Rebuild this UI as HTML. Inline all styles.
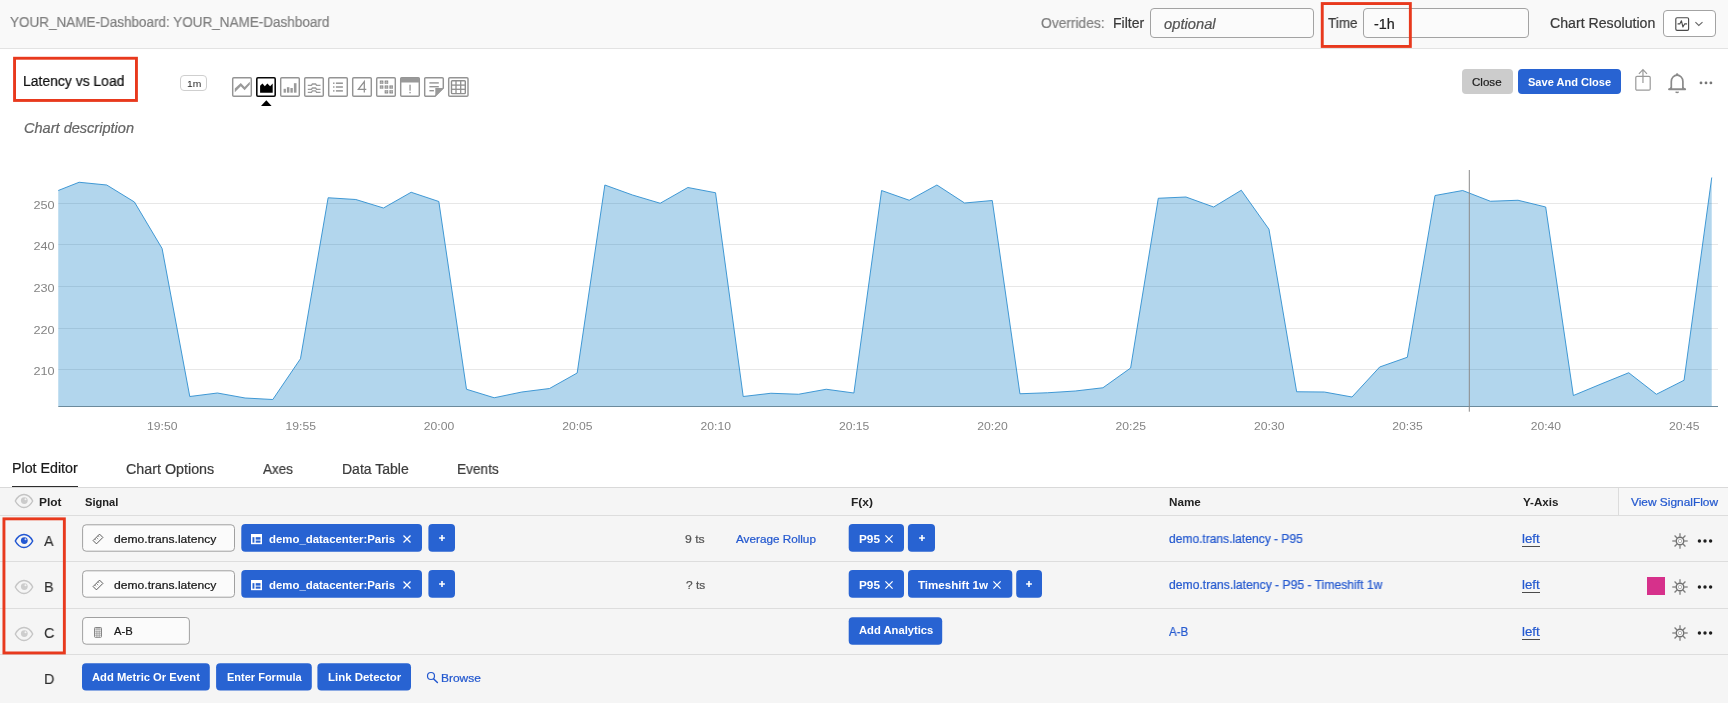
<!DOCTYPE html>
<html><head><meta charset="utf-8"><title>Latency vs Load</title>
<style>
html,body{margin:0;padding:0;background:#fff;}
body{width:1728px;height:703px;position:relative;overflow:hidden;font-family:"Liberation Sans", sans-serif;}
.b{position:absolute;}
.t{position:absolute;white-space:nowrap;line-height:normal;transform-origin:0 0;will-change:transform;font-family:"Liberation Sans", sans-serif;}
svg text{font-family:"Liberation Sans", sans-serif;}
svg.chart{will-change:transform;}
</style></head><body>
<div class="b" style="left:0px;top:0px;width:1728px;height:48px;background:#f9f9f9;border-bottom:1px solid #e3e3e3;"></div>
<div class="b" style="left:1150px;top:8px;width:164px;height:30px;box-sizing:border-box;border:1px solid #a3a3a3;border-radius:4px;background:#fbfbfb;"></div>
<div class="b" style="left:1363px;top:8px;width:166px;height:30px;box-sizing:border-box;border:1px solid #a3a3a3;border-radius:4px;background:#fbfbfb;"></div>
<div class="b" style="left:1663px;top:10px;width:53px;height:27px;box-sizing:border-box;border:1px solid #a3a3a3;border-radius:4px;background:#fff;"></div>
<div class="b" style="left:180px;top:75px;width:27px;height:16px;box-sizing:border-box;border:1px solid #cfcfcf;border-radius:4px;background:#fff;"></div>
<div class="b" style="left:1462px;top:69px;width:51px;height:25px;background:#cccccc;border-radius:4px;"></div>
<div class="b" style="left:1518px;top:69px;width:103px;height:25px;background:#2863d2;border-radius:4px;"></div>
<div class="b" style="left:12px;top:486px;width:66px;height:1px;background:#2e2e2e;"></div>
<div class="b" style="left:0px;top:487px;width:1728px;height:216px;background:#f5f5f5;border-top:1px solid #d9d9d9;"></div>
<div class="b" style="left:0px;top:515px;width:1728px;height:1px;background:#dddddd;"></div>
<div class="b" style="left:0px;top:561px;width:1728px;height:1px;background:#dddddd;"></div>
<div class="b" style="left:0px;top:608px;width:1728px;height:1px;background:#dddddd;"></div>
<div class="b" style="left:0px;top:654px;width:1728px;height:1px;background:#dddddd;"></div>
<div class="b" style="left:1618px;top:488px;width:110px;height:27px;background:#f7f7f7;border-left:1px solid #dcdcdc;"></div>
<div class="b" style="left:1647px;top:577px;width:17.700000000000045px;height:17.700000000000045px;background:#d6318b;"></div>
<svg class="b" style="left:0;top:0" width="1728" height="703" viewBox="0 0 1728 703"><rect x="82.60" y="524.80" width="151.90" height="26.40" rx="3.5" fill="#fbfbfb" stroke="#a0a0a0" stroke-width="1"/><rect x="82.60" y="570.80" width="151.90" height="26.40" rx="3.5" fill="#fbfbfb" stroke="#a0a0a0" stroke-width="1"/><rect x="82.60" y="617.50" width="106.80" height="26.70" rx="3.5" fill="#fbfbfb" stroke="#a0a0a0" stroke-width="1"/><rect x="241.30" y="524.00" width="180.70" height="27.70" rx="4" fill="#2863d2"/><rect x="428.40" y="524.00" width="26.60" height="27.70" rx="4" fill="#2863d2"/><rect x="848.70" y="524.00" width="55.30" height="27.70" rx="4" fill="#2863d2"/><rect x="241.30" y="570.00" width="180.70" height="27.80" rx="4" fill="#2863d2"/><rect x="428.40" y="570.00" width="26.60" height="27.80" rx="4" fill="#2863d2"/><rect x="848.70" y="570.00" width="55.30" height="27.80" rx="4" fill="#2863d2"/><rect x="907.90" y="524.00" width="27.10" height="27.70" rx="4" fill="#2863d2"/><rect x="908.00" y="570.00" width="104.30" height="27.80" rx="4" fill="#2863d2"/><rect x="1016.20" y="570.00" width="25.80" height="27.80" rx="4" fill="#2863d2"/><rect x="848.70" y="617.30" width="93.50" height="27.40" rx="4" fill="#2863d2"/><rect x="82.00" y="663.20" width="127.80" height="27.30" rx="4" fill="#2863d2"/><rect x="216.10" y="663.20" width="95.70" height="27.30" rx="4" fill="#2863d2"/><rect x="317.40" y="663.20" width="93.60" height="27.30" rx="4" fill="#2863d2"/></svg>
<div class="b" style="left:1522px;top:546px;width:18px;height:1px;background:#4a4a4a;"></div>
<div class="b" style="left:1522px;top:592px;width:18px;height:1px;background:#4a4a4a;"></div>
<div class="b" style="left:1522px;top:639px;width:18px;height:1px;background:#4a4a4a;"></div>
<svg class="b chart" style="left:0;top:150px" width="1728" height="300" viewBox="0 150 1728 300">
<line x1="58.3" x2="1718" y1="203.5" y2="203.5" stroke="#e7e7e7" stroke-width="1"/>
<line x1="58.3" x2="1718" y1="244.5" y2="244.5" stroke="#e7e7e7" stroke-width="1"/>
<line x1="58.3" x2="1718" y1="286.5" y2="286.5" stroke="#e7e7e7" stroke-width="1"/>
<line x1="58.3" x2="1718" y1="328.5" y2="328.5" stroke="#e7e7e7" stroke-width="1"/>
<line x1="58.3" x2="1718" y1="369.5" y2="369.5" stroke="#e7e7e7" stroke-width="1"/>
<polygon points="58.25,406.5 58.25,190.50 79.08,182.25 106.76,185.00 134.43,202.00 162.10,248.50 189.77,396.50 217.44,393.00 245.12,398.00 272.79,399.50 300.46,358.75 328.13,197.75 355.80,199.50 383.48,208.00 411.15,192.25 438.82,201.50 466.49,389.25 494.16,397.75 521.84,392.00 549.51,388.50 577.18,373.00 604.85,185.00 632.52,195.00 660.20,203.25 687.87,187.50 715.54,192.75 743.21,396.50 770.88,393.25 798.56,394.25 826.23,389.25 853.90,393.00 881.57,190.50 909.24,200.25 936.92,185.00 964.59,203.00 992.26,200.50 1019.93,393.75 1047.60,392.75 1075.28,391.00 1102.95,387.75 1130.62,368.00 1158.29,198.25 1185.96,197.00 1213.64,207.00 1241.31,190.25 1268.98,229.25 1296.65,391.75 1324.32,392.00 1352.00,397.00 1379.67,367.00 1407.34,357.25 1435.01,195.50 1462.68,190.50 1490.36,201.25 1518.03,200.25 1545.70,207.00 1573.37,395.50 1601.04,384.00 1628.72,372.75 1656.39,394.25 1684.06,380.25 1711.73,177.50 1711.73,406.5" fill="rgba(0,119,194,0.3)"/>
<polyline points="58.25,190.50 79.08,182.25 106.76,185.00 134.43,202.00 162.10,248.50 189.77,396.50 217.44,393.00 245.12,398.00 272.79,399.50 300.46,358.75 328.13,197.75 355.80,199.50 383.48,208.00 411.15,192.25 438.82,201.50 466.49,389.25 494.16,397.75 521.84,392.00 549.51,388.50 577.18,373.00 604.85,185.00 632.52,195.00 660.20,203.25 687.87,187.50 715.54,192.75 743.21,396.50 770.88,393.25 798.56,394.25 826.23,389.25 853.90,393.00 881.57,190.50 909.24,200.25 936.92,185.00 964.59,203.00 992.26,200.50 1019.93,393.75 1047.60,392.75 1075.28,391.00 1102.95,387.75 1130.62,368.00 1158.29,198.25 1185.96,197.00 1213.64,207.00 1241.31,190.25 1268.98,229.25 1296.65,391.75 1324.32,392.00 1352.00,397.00 1379.67,367.00 1407.34,357.25 1435.01,195.50 1462.68,190.50 1490.36,201.25 1518.03,200.25 1545.70,207.00 1573.37,395.50 1601.04,384.00 1628.72,372.75 1656.39,394.25 1684.06,380.25 1711.73,177.50" fill="none" stroke="#2f8fd0" stroke-width="1" stroke-linejoin="round" stroke-opacity="0.9"/>
<line x1="58.3" x2="1718" y1="406.5" y2="406.5" stroke="#6b8a9c" stroke-width="1.2"/>
<line x1="1469.3" x2="1469.3" y1="170" y2="411.7" stroke="#8a8a8a" stroke-width="1"/>
<text x="33.4" y="208.8" font-size="11.4" textLength="21.2" lengthAdjust="spacingAndGlyphs" fill="#858585">250</text>
<text x="33.4" y="249.8" font-size="11.4" textLength="21.2" lengthAdjust="spacingAndGlyphs" fill="#858585">240</text>
<text x="33.4" y="291.8" font-size="11.4" textLength="21.2" lengthAdjust="spacingAndGlyphs" fill="#858585">230</text>
<text x="33.4" y="333.8" font-size="11.4" textLength="21.2" lengthAdjust="spacingAndGlyphs" fill="#858585">220</text>
<text x="33.4" y="374.8" font-size="11.4" textLength="21.2" lengthAdjust="spacingAndGlyphs" fill="#858585">210</text>
<text x="147.1" y="429.8" font-size="11.5" textLength="30.4" lengthAdjust="spacingAndGlyphs" fill="#858585">19:50</text>
<text x="285.5" y="429.8" font-size="11.5" textLength="30.4" lengthAdjust="spacingAndGlyphs" fill="#858585">19:55</text>
<text x="423.8" y="429.8" font-size="11.5" textLength="30.4" lengthAdjust="spacingAndGlyphs" fill="#858585">20:00</text>
<text x="562.2" y="429.8" font-size="11.5" textLength="30.4" lengthAdjust="spacingAndGlyphs" fill="#858585">20:05</text>
<text x="700.5" y="429.8" font-size="11.5" textLength="30.4" lengthAdjust="spacingAndGlyphs" fill="#858585">20:10</text>
<text x="838.9" y="429.8" font-size="11.5" textLength="30.4" lengthAdjust="spacingAndGlyphs" fill="#858585">20:15</text>
<text x="977.3" y="429.8" font-size="11.5" textLength="30.4" lengthAdjust="spacingAndGlyphs" fill="#858585">20:20</text>
<text x="1115.6" y="429.8" font-size="11.5" textLength="30.4" lengthAdjust="spacingAndGlyphs" fill="#858585">20:25</text>
<text x="1254.0" y="429.8" font-size="11.5" textLength="30.4" lengthAdjust="spacingAndGlyphs" fill="#858585">20:30</text>
<text x="1392.3" y="429.8" font-size="11.5" textLength="30.4" lengthAdjust="spacingAndGlyphs" fill="#858585">20:35</text>
<text x="1530.7" y="429.8" font-size="11.5" textLength="30.4" lengthAdjust="spacingAndGlyphs" fill="#858585">20:40</text>
<text x="1669.1" y="429.8" font-size="11.5" textLength="30.4" lengthAdjust="spacingAndGlyphs" fill="#858585">20:45</text>
</svg>
<svg class="b" style="left:232px;top:77px;overflow:visible" width="21" height="20" viewBox="0 0 21 20" ><rect x="0.7" y="0.7" width="18.6" height="18.6" rx="1.1" fill="#fff" stroke="#949494" stroke-width="1.45"/><polygon points="2.8,11.4 8.8,6 12.6,10 17.8,4.8 17.8,7.6 12.6,13.3 8.8,9.3 2.8,15.2" fill="#9a9a9a"/></svg>
<svg class="b" style="left:256px;top:77px;overflow:visible" width="21" height="20" viewBox="0 0 21 20" ><rect x="0.8" y="0.8" width="18.4" height="18.4" rx="1.1" fill="#fff" stroke="#0a0a0a" stroke-width="1.6"/><polygon points="4.1,15.7 4.1,8.8 6.5,6.4 8.8,9.2 11.4,6.4 14.1,9.2 16.7,6.6 16.7,15.7" fill="#000"/></svg>
<svg class="b" style="left:280px;top:77px;overflow:visible" width="21" height="20" viewBox="0 0 21 20" ><rect x="0.7" y="0.7" width="18.6" height="18.6" rx="1.1" fill="#fff" stroke="#949494" stroke-width="1.45"/><g fill="#9a9a9a"><rect x="3.6" y="11.8" width="2.3" height="3.9"/><rect x="6.9" y="10.2" width="2.5" height="5.5"/><rect x="10.4" y="11" width="2.4" height="4.7"/><rect x="13.9" y="6.2" width="2.6" height="9.5"/></g></svg>
<svg class="b" style="left:304px;top:77px;overflow:visible" width="21" height="20" viewBox="0 0 21 20" ><rect x="0.7" y="0.7" width="18.6" height="18.6" rx="1.1" fill="#fff" stroke="#949494" stroke-width="1.45"/><g fill="none" stroke="#9a9a9a" stroke-width="1.35"><path d="M3.8 8.4 H7.4 L8.4 7.0 H11.6 L12.6 8.4 H16.5" /><path d="M3.8 12.4 H7.4 L8.4 11.0 H11.6 L12.6 12.4 H16.5" /><path d="M3.8 15.3 H7.4 L8.4 13.9 H11.6 L12.6 15.3 H16.5" /></g></svg>
<svg class="b" style="left:328px;top:77px;overflow:visible" width="21" height="20" viewBox="0 0 21 20" ><rect x="0.7" y="0.7" width="18.6" height="18.6" rx="1.1" fill="#fff" stroke="#949494" stroke-width="1.45"/><g fill="#949494"><rect x="5" y="5.5" width="1.5" height="1.4"/><rect x="7.9" y="5.45" width="7" height="1.5"/><rect x="5" y="9.3" width="1.5" height="1.4"/><rect x="7.9" y="9.25" width="7" height="1.5"/><rect x="5" y="13.200000000000001" width="1.5" height="1.4"/><rect x="7.9" y="13.15" width="7" height="1.5"/></g></svg>
<svg class="b" style="left:352px;top:77px;overflow:visible" width="21" height="20" viewBox="0 0 21 20" ><rect x="0.7" y="0.7" width="18.6" height="18.6" rx="1.1" fill="#fff" stroke="#949494" stroke-width="1.45"/><path d="M12.3 15.4 V4.6 L6.3 12.3 H14.3" fill="none" stroke="#8f8f8f" stroke-width="1.25" stroke-linejoin="miter"/></svg>
<svg class="b" style="left:376px;top:77px;overflow:visible" width="21" height="20" viewBox="0 0 21 20" ><rect x="0.7" y="0.7" width="18.6" height="18.6" rx="1.1" fill="#fff" stroke="#949494" stroke-width="1.45"/><rect x="3.8" y="3.5" width="3.55" height="3.3" fill="#8c8c8c"/><rect x="5.35" y="3.5" width="0.45" height="3.3" fill="#cfcfcf"/><rect x="3.8" y="4.95" width="3.55" height="0.4" fill="#cfcfcf"/><rect x="8.65" y="3.5" width="3.55" height="3.3" fill="#8c8c8c"/><rect x="10.200000000000001" y="3.5" width="0.45" height="3.3" fill="#cfcfcf"/><rect x="8.65" y="4.95" width="3.55" height="0.4" fill="#cfcfcf"/><rect x="3.8" y="8.4" width="3.55" height="3.3" fill="#8c8c8c"/><rect x="5.35" y="8.4" width="0.45" height="3.3" fill="#cfcfcf"/><rect x="3.8" y="9.85" width="3.55" height="0.4" fill="#cfcfcf"/><rect x="8.65" y="8.4" width="3.55" height="3.3" fill="#8c8c8c"/><rect x="10.200000000000001" y="8.4" width="0.45" height="3.3" fill="#cfcfcf"/><rect x="8.65" y="9.85" width="3.55" height="0.4" fill="#cfcfcf"/><rect x="13.4" y="8.4" width="3.55" height="3.3" fill="#8c8c8c"/><rect x="14.950000000000001" y="8.4" width="0.45" height="3.3" fill="#cfcfcf"/><rect x="13.4" y="9.85" width="3.55" height="0.4" fill="#cfcfcf"/><rect x="8.65" y="13.2" width="3.55" height="3.3" fill="#8c8c8c"/><rect x="10.200000000000001" y="13.2" width="0.45" height="3.3" fill="#cfcfcf"/><rect x="8.65" y="14.649999999999999" width="3.55" height="0.4" fill="#cfcfcf"/><rect x="13.4" y="13.2" width="3.55" height="3.3" fill="#8c8c8c"/><rect x="14.950000000000001" y="13.2" width="0.45" height="3.3" fill="#cfcfcf"/><rect x="13.4" y="14.649999999999999" width="3.55" height="0.4" fill="#cfcfcf"/></svg>
<svg class="b" style="left:400px;top:77px;overflow:visible" width="21" height="20" viewBox="0 0 21 20" ><rect x="0.7" y="0.7" width="18.6" height="18.6" rx="1.1" fill="#fff" stroke="#949494" stroke-width="1.45"/><rect x="0.7" y="0.7" width="18.6" height="4.8" fill="#999"/><rect x="9.4" y="7.7" width="1.3" height="6" fill="#949494"/><rect x="9.35" y="14.9" width="1.4" height="1.4" fill="#949494"/></svg>
<svg class="b" style="left:424px;top:77px;overflow:visible" width="21" height="20" viewBox="0 0 21 20" ><path d="M1.8 0.7 H18.2 a1.1 1.1 0 0 1 1.1 1.1 V11 L11 19.3 H1.8 a1.1 1.1 0 0 1 -1.1 -1.1 V1.8 a1.1 1.1 0 0 1 1.1 -1.1 Z" fill="#fff" stroke="#949494" stroke-width="1.45"/><polygon points="11.3,11.1 19.7,11.1 11.3,19.5" fill="#999"/><g fill="#949494"><rect x="5.4" y="5.2" width="9.4" height="1.4"/><rect x="5.4" y="9" width="9.4" height="1.4"/><rect x="5.4" y="13" width="4.5" height="1.4"/></g></svg>
<svg class="b" style="left:448px;top:77px;overflow:visible" width="21" height="20" viewBox="0 0 21 20" ><rect x="0.7" y="0.7" width="19.3" height="18.6" rx="1.1" fill="#fff" stroke="#949494" stroke-width="1.45"/><rect x="3.5" y="3.8" width="13.8" height="12.8" rx="0.8" fill="#fff" stroke="#8f8f8f" stroke-width="1.4"/><line x1="8.0" x2="8.0" y1="3.8" y2="16.6" stroke="#8f8f8f" stroke-width="1.3"/><line x1="12.7" x2="12.7" y1="3.8" y2="16.6" stroke="#8f8f8f" stroke-width="1.3"/><line x1="3.5" x2="17.3" y1="8.1" y2="8.1" stroke="#8f8f8f" stroke-width="1.3"/><line x1="3.5" x2="17.3" y1="12.3" y2="12.3" stroke="#8f8f8f" stroke-width="1.3"/></svg>
<svg class="b" style="left:258px;top:98px;overflow:visible" width="16" height="10" viewBox="0 0 16 10" ><polygon points="3,8 13.6,8 8.3,2.3" fill="#000"/></svg>
<svg class="b" style="left:1630px;top:66px;overflow:visible" width="26" height="28" viewBox="0 0 26 28" ><g fill="none" stroke="#9a9a9a" stroke-width="1.2"><rect x="5.8" y="10.4" width="14.4" height="13.8" rx="1.2"/><path d="M12.95 17 V4 M8.9 7.8 L12.95 3.7 L17 7.8"/></g></svg>
<svg class="b" style="left:1664px;top:70px;overflow:visible" width="26" height="26" viewBox="0 0 26 26" ><g fill="none" stroke="#8a8a8a" stroke-width="1.7" stroke-linejoin="round"><path d="M7.3 19.2 V11.4 a5.8 6.2 0 0 1 11.6 0 V19.2"/><path d="M5 19.3 H21.2" stroke-width="1.9" stroke-linecap="round"/><path d="M7.3 17.6 L5.4 19.3 M18.9 17.6 L20.8 19.3" stroke-width="1.3"/><path d="M11.6 21.7 Q13.1 23.3 14.6 21.7" stroke-width="1.3"/></g><circle cx="13.1" cy="4.4" r="1.25" fill="#8a8a8a"/></svg>
<svg class="b" style="left:1696px;top:78px;overflow:visible" width="20" height="10" viewBox="0 0 20 10" ><g fill="#777"><circle cx="5" cy="4.9" r="1.4"/><circle cx="10" cy="4.9" r="1.4"/><circle cx="14.9" cy="4.9" r="1.4"/></g></svg>
<svg class="b" style="left:1670px;top:12px;overflow:visible" width="40" height="24" viewBox="0 0 40 24" ><g fill="none" stroke="#4a4a4a" stroke-width="1.15" stroke-linejoin="round" stroke-linecap="round"><rect x="5.8" y="5.7" width="12.8" height="12.6" rx="1.3"/><path d="M8 11.9 H9.8 L11.4 8.7 L12.9 15 L14.6 11.9 H16.6" stroke-width="1.1"/></g><path d="M25.4 10.2 L28.8 13.5 L32.5 10.2" fill="none" stroke="#666" stroke-width="1.1"/></svg>
<svg class="b" style="left:12px;top:491.4px;overflow:visible" width="24" height="20" viewBox="-12 -10 24 20"><path d="M-8.7 0 C-4.3 -8.6 4.3 -8.6 8.7 0 C4.3 8.6 -4.3 8.6 -8.7 0 Z" stroke-linejoin="miter" fill="none" stroke="#c4c4c4" stroke-width="1.4"/><circle cx="0.3" cy="-0.4" r="3.4" fill="#cbcbcb"/><circle cx="1.5" cy="-1.7" r="1" fill="#fff" fill-opacity="0.75"/></svg>
<svg class="b" style="left:12px;top:531px;overflow:visible" width="24" height="20" viewBox="-12 -10 24 20"><path d="M-8.7 0 C-4.3 -8.6 4.3 -8.6 8.7 0 C4.3 8.6 -4.3 8.6 -8.7 0 Z" stroke-linejoin="miter" fill="none" stroke="#2257d2" stroke-width="1.5"/><circle cx="0.3" cy="-0.4" r="3.4" fill="#2257d2"/><circle cx="1.5" cy="-1.7" r="1" fill="#fff" fill-opacity="0.75"/></svg>
<svg class="b" style="left:12.100000000000001px;top:577px;overflow:visible" width="24" height="20" viewBox="-12 -10 24 20"><path d="M-8.7 0 C-4.3 -8.6 4.3 -8.6 8.7 0 C4.3 8.6 -4.3 8.6 -8.7 0 Z" stroke-linejoin="miter" fill="none" stroke="#c6c6c6" stroke-width="1.4"/><circle cx="0.3" cy="-0.4" r="3.4" fill="#cdcdcd"/><circle cx="1.5" cy="-1.7" r="1" fill="#fff" fill-opacity="0.75"/></svg>
<svg class="b" style="left:12.100000000000001px;top:623.9px;overflow:visible" width="24" height="20" viewBox="-12 -10 24 20"><path d="M-8.7 0 C-4.3 -8.6 4.3 -8.6 8.7 0 C4.3 8.6 -4.3 8.6 -8.7 0 Z" stroke-linejoin="miter" fill="none" stroke="#c6c6c6" stroke-width="1.4"/><circle cx="0.3" cy="-0.4" r="3.4" fill="#cdcdcd"/><circle cx="1.5" cy="-1.7" r="1" fill="#fff" fill-opacity="0.75"/></svg>
<svg class="b" style="left:89.95px;top:531px;overflow:visible" width="16" height="16" viewBox="-8 -8 16 16"><g transform="rotate(-45)" fill="none" stroke="#4a4a4a" stroke-width="0.85"><rect x="-4.55" y="-2.35" width="9.1" height="4.7"/><path d="M-2.3 -2.35 V-0.4 M0 -2.35 V0.3 M2.3 -2.35 V-0.4" stroke-width="0.7" stroke="#777"/></g></svg>
<svg class="b" style="left:89.95px;top:577.3px;overflow:visible" width="16" height="16" viewBox="-8 -8 16 16"><g transform="rotate(-45)" fill="none" stroke="#4a4a4a" stroke-width="0.85"><rect x="-4.55" y="-2.35" width="9.1" height="4.7"/><path d="M-2.3 -2.35 V-0.4 M0 -2.35 V0.3 M2.3 -2.35 V-0.4" stroke-width="0.7" stroke="#777"/></g></svg>
<svg class="b" style="left:94px;top:626.7px;overflow:visible" width="8" height="11" viewBox="0 0 8 11" ><rect x="0.5" y="0.5" width="7" height="9.8" rx="0.8" fill="none" stroke="#777" stroke-width="0.9"/><rect x="1.3" y="1.4" width="5.4" height="1.3" fill="#999"/><line x1="0.5" x2="7.5" y1="4.2" y2="4.2" stroke="#8c8c8c" stroke-width="0.7"/><line x1="0.5" x2="7.5" y1="6.2" y2="6.2" stroke="#8c8c8c" stroke-width="0.7"/><line x1="0.5" x2="7.5" y1="8.2" y2="8.2" stroke="#8c8c8c" stroke-width="0.7"/><line x1="2.9" x2="2.9" y1="3.6" y2="10.3" stroke="#8c8c8c" stroke-width="0.7"/><line x1="5.2" x2="5.2" y1="3.6" y2="10.3" stroke="#8c8c8c" stroke-width="0.7"/></svg>
<svg class="b" style="left:251px;top:534px;overflow:visible" width="11" height="10.2" viewBox="0 0 11 10.2" ><rect x="0.75" y="0.75" width="9.5" height="8.7" fill="none" stroke="#fff" stroke-width="1.5"/><rect x="0.75" y="0.75" width="9.5" height="2.4" fill="#fff"/><rect x="3.4" y="3" width="1.3" height="6.4" fill="#fff"/><rect x="4" y="5.6" width="6.2" height="1" fill="#fff" fill-opacity="0.9"/></svg>
<svg class="b" style="left:251px;top:580.2px;overflow:visible" width="11" height="10.2" viewBox="0 0 11 10.2" ><rect x="0.75" y="0.75" width="9.5" height="8.7" fill="none" stroke="#fff" stroke-width="1.5"/><rect x="0.75" y="0.75" width="9.5" height="2.4" fill="#fff"/><rect x="3.4" y="3" width="1.3" height="6.4" fill="#fff"/><rect x="4" y="5.6" width="6.2" height="1" fill="#fff" fill-opacity="0.9"/></svg>
<svg class="b" style="left:401.5px;top:534.1px;overflow:visible" width="10" height="10" viewBox="-5 -5 10 10"><path d="M-3.5 -3.5 L3.5 3.5 M3.5 -3.5 L-3.5 3.5" stroke="#fff" stroke-width="1.25" fill="none"/></svg>
<svg class="b" style="left:883.8px;top:534.1px;overflow:visible" width="10" height="10" viewBox="-5 -5 10 10"><path d="M-3.6 -3.6 L3.6 3.6 M3.6 -3.6 L-3.6 3.6" stroke="#fff" stroke-width="1.25" fill="none"/></svg>
<svg class="b" style="left:436.7px;top:532.5px;overflow:visible" width="10" height="10" viewBox="-5 -5 10 10"><path d="M-2.9 0 H2.9 M0 -2.9 V2.9" stroke="#fff" stroke-width="1.6" fill="none"/></svg>
<svg class="b" style="left:401.5px;top:580.1px;overflow:visible" width="10" height="10" viewBox="-5 -5 10 10"><path d="M-3.5 -3.5 L3.5 3.5 M3.5 -3.5 L-3.5 3.5" stroke="#fff" stroke-width="1.25" fill="none"/></svg>
<svg class="b" style="left:883.8px;top:580.1px;overflow:visible" width="10" height="10" viewBox="-5 -5 10 10"><path d="M-3.6 -3.6 L3.6 3.6 M3.6 -3.6 L-3.6 3.6" stroke="#fff" stroke-width="1.25" fill="none"/></svg>
<svg class="b" style="left:436.7px;top:578.5px;overflow:visible" width="10" height="10" viewBox="-5 -5 10 10"><path d="M-2.9 0 H2.9 M0 -2.9 V2.9" stroke="#fff" stroke-width="1.6" fill="none"/></svg>
<svg class="b" style="left:991.7px;top:580.1px;overflow:visible" width="10" height="10" viewBox="-5 -5 10 10"><path d="M-3.6 -3.6 L3.6 3.6 M3.6 -3.6 L-3.6 3.6" stroke="#fff" stroke-width="1.25" fill="none"/></svg>
<svg class="b" style="left:916.5px;top:532.5px;overflow:visible" width="10" height="10" viewBox="-5 -5 10 10"><path d="M-2.9 0 H2.9 M0 -2.9 V2.9" stroke="#fff" stroke-width="1.6" fill="none"/></svg>
<svg class="b" style="left:1024.4px;top:578.7px;overflow:visible" width="10" height="10" viewBox="-5 -5 10 10"><path d="M-2.9 0 H2.9 M0 -2.9 V2.9" stroke="#fff" stroke-width="1.6" fill="none"/></svg>
<svg class="b" style="left:1671.25px;top:531.5px;overflow:visible" width="18" height="18" viewBox="-9 -9 18 18"><g stroke="#7d7d7d" fill="none"><circle r="3.8" stroke-width="1.4" stroke="#707070"/><circle r="1.7" stroke-width="0.7" stroke="#a0a0a0" fill="#fff"/><line x1="4.20" y1="0.00" x2="7.70" y2="0.00" stroke-width="1.3"/><line x1="2.97" y1="2.97" x2="5.44" y2="5.44" stroke-width="1.3"/><line x1="0.00" y1="4.20" x2="0.00" y2="7.70" stroke-width="1.3"/><line x1="-2.97" y1="2.97" x2="-5.44" y2="5.44" stroke-width="1.3"/><line x1="-4.20" y1="0.00" x2="-7.70" y2="0.00" stroke-width="1.3"/><line x1="-2.97" y1="-2.97" x2="-5.44" y2="-5.44" stroke-width="1.3"/><line x1="-0.00" y1="-4.20" x2="-0.00" y2="-7.70" stroke-width="1.3"/><line x1="2.97" y1="-2.97" x2="5.44" y2="-5.44" stroke-width="1.3"/></g></svg>
<svg class="b" style="left:1695.9px;top:536.5px;overflow:visible" width="18" height="8" viewBox="-9 -4 18 8"><g fill="#1e1e1e"><circle cx="-5.6" cy="0" r="1.7"/><circle cx="0" cy="0" r="1.7"/><circle cx="5.6" cy="0" r="1.7"/></g></svg>
<svg class="b" style="left:1671.25px;top:577.9px;overflow:visible" width="18" height="18" viewBox="-9 -9 18 18"><g stroke="#7d7d7d" fill="none"><circle r="3.8" stroke-width="1.4" stroke="#707070"/><circle r="1.7" stroke-width="0.7" stroke="#a0a0a0" fill="#fff"/><line x1="4.20" y1="0.00" x2="7.70" y2="0.00" stroke-width="1.3"/><line x1="2.97" y1="2.97" x2="5.44" y2="5.44" stroke-width="1.3"/><line x1="0.00" y1="4.20" x2="0.00" y2="7.70" stroke-width="1.3"/><line x1="-2.97" y1="2.97" x2="-5.44" y2="5.44" stroke-width="1.3"/><line x1="-4.20" y1="0.00" x2="-7.70" y2="0.00" stroke-width="1.3"/><line x1="-2.97" y1="-2.97" x2="-5.44" y2="-5.44" stroke-width="1.3"/><line x1="-0.00" y1="-4.20" x2="-0.00" y2="-7.70" stroke-width="1.3"/><line x1="2.97" y1="-2.97" x2="5.44" y2="-5.44" stroke-width="1.3"/></g></svg>
<svg class="b" style="left:1695.9px;top:582.9px;overflow:visible" width="18" height="8" viewBox="-9 -4 18 8"><g fill="#1e1e1e"><circle cx="-5.6" cy="0" r="1.7"/><circle cx="0" cy="0" r="1.7"/><circle cx="5.6" cy="0" r="1.7"/></g></svg>
<svg class="b" style="left:1671.25px;top:624.2px;overflow:visible" width="18" height="18" viewBox="-9 -9 18 18"><g stroke="#7d7d7d" fill="none"><circle r="3.8" stroke-width="1.4" stroke="#707070"/><circle r="1.7" stroke-width="0.7" stroke="#a0a0a0" fill="#fff"/><line x1="4.20" y1="0.00" x2="7.70" y2="0.00" stroke-width="1.3"/><line x1="2.97" y1="2.97" x2="5.44" y2="5.44" stroke-width="1.3"/><line x1="0.00" y1="4.20" x2="0.00" y2="7.70" stroke-width="1.3"/><line x1="-2.97" y1="2.97" x2="-5.44" y2="5.44" stroke-width="1.3"/><line x1="-4.20" y1="0.00" x2="-7.70" y2="0.00" stroke-width="1.3"/><line x1="-2.97" y1="-2.97" x2="-5.44" y2="-5.44" stroke-width="1.3"/><line x1="-0.00" y1="-4.20" x2="-0.00" y2="-7.70" stroke-width="1.3"/><line x1="2.97" y1="-2.97" x2="5.44" y2="-5.44" stroke-width="1.3"/></g></svg>
<svg class="b" style="left:1695.9px;top:629.2px;overflow:visible" width="18" height="8" viewBox="-9 -4 18 8"><g fill="#1e1e1e"><circle cx="-5.6" cy="0" r="1.7"/><circle cx="0" cy="0" r="1.7"/><circle cx="5.6" cy="0" r="1.7"/></g></svg>
<svg class="b" style="left:425.1px;top:670.35px;overflow:visible" width="14" height="14" viewBox="-6 -6 14 14"><g fill="none" stroke="#2358cf" stroke-width="1.2" stroke-linecap="round"><circle cx="0" cy="0" r="3.5"/><path d="M2.7 3 L6.4 6.5" stroke-width="1.5"/></g></svg><svg class="b" style="left:0;top:0;pointer-events:none" width="1728" height="703" viewBox="0 0 1728 703"><rect x="1322.25" y="3.55" width="88.10" height="42.90" fill="none" stroke="#e8391d" stroke-width="2.9"/><rect x="14.55" y="58.25" width="121.90" height="42.20" fill="none" stroke="#e8391d" stroke-width="2.9"/><rect x="3.95" y="518.85" width="60.40" height="134.10" fill="none" stroke="#e8391d" stroke-width="2.9"/></svg>
<span class="t" style="left:10.0px;top:14px;font-size:14px;color:#808080;-webkit-text-stroke:0.22px;transform:scaleX(0.9641);">YOUR_NAME-Dashboard: YOUR_NAME-Dashboard</span>
<span class="t" style="left:1040.8px;top:15px;font-size:14px;color:#808080;-webkit-text-stroke:0.22px;transform:scaleX(0.9849);">Overrides:</span>
<span class="t" style="left:1113.1px;top:15px;font-size:14px;color:#3a3a3a;-webkit-text-stroke:0.22px;">Filter</span>
<span class="t" style="left:1163.8px;top:16px;font-size:14px;color:#555;-webkit-text-stroke:0.22px;font-style:italic;transform:scaleX(1.0531);">optional</span>
<span class="t" style="left:1327.9px;top:15px;font-size:14px;color:#3a3a3a;-webkit-text-stroke:0.22px;transform:scaleX(0.9675);">Time</span>
<span class="t" style="left:1374.2px;top:16px;font-size:14px;color:#222;-webkit-text-stroke:0.22px;transform:scaleX(1.0255);">-1h</span>
<span class="t" style="left:1549.7px;top:15px;font-size:14px;color:#3a3a3a;-webkit-text-stroke:0.22px;transform:scaleX(1.0098);">Chart Resolution</span>
<span class="t" style="left:23.2px;top:73px;font-size:14px;color:#111;-webkit-text-stroke:0.22px;transform:scaleX(0.9944);">Latency vs Load</span>
<span class="t" style="left:186.6px;top:78px;font-size:9.8px;color:#2a2a2a;-webkit-text-stroke:0.22px;transform:scaleX(1.0495);-webkit-text-stroke:0;">1m</span>
<span class="t" style="left:24.2px;top:120px;font-size:14px;color:#666;-webkit-text-stroke:0.22px;font-style:italic;transform:scaleX(1.0394);">Chart description</span>
<span class="t" style="left:1472.4px;top:76px;font-size:11px;color:#222;-webkit-text-stroke:0.22px;transform:scaleX(1.0524);">Close</span>
<span class="t" style="left:1527.6px;top:76px;font-size:11px;color:#fff;font-weight:700;transform:scaleX(1.0044);">Save And Close</span>
<span class="t" style="left:12.3px;top:460px;font-size:14px;color:#1a1a1a;-webkit-text-stroke:0.22px;transform:scaleX(1.0171);">Plot Editor</span>
<span class="t" style="left:126.4px;top:461px;font-size:14px;color:#3c3c3c;-webkit-text-stroke:0.22px;transform:scaleX(1.0211);">Chart Options</span>
<span class="t" style="left:263.0px;top:461px;font-size:14px;color:#3c3c3c;-webkit-text-stroke:0.22px;transform:scaleX(0.9639);">Axes</span>
<span class="t" style="left:341.5px;top:461px;font-size:14px;color:#3c3c3c;-webkit-text-stroke:0.22px;transform:scaleX(0.9972);">Data Table</span>
<span class="t" style="left:456.8px;top:461px;font-size:14px;color:#3c3c3c;-webkit-text-stroke:0.22px;transform:scaleX(0.9764);">Events</span>
<span class="t" style="left:38.5px;top:496px;font-size:11px;color:#222;font-weight:700;transform:scaleX(1.0827);">Plot</span>
<span class="t" style="left:84.9px;top:496px;font-size:11px;color:#222;font-weight:700;transform:scaleX(1.0116);">Signal</span>
<span class="t" style="left:851.3px;top:496px;font-size:11px;color:#222;font-weight:700;transform:scaleX(1.0906);">F(x)</span>
<span class="t" style="left:1169.4px;top:496px;font-size:11px;color:#222;font-weight:700;transform:scaleX(1.0611);">Name</span>
<span class="t" style="left:1522.9px;top:496px;font-size:11px;color:#222;font-weight:700;transform:scaleX(1.0553);">Y-Axis</span>
<span class="t" style="left:1630.6px;top:496px;font-size:11px;color:#2459cf;-webkit-text-stroke:0.22px;transform:scaleX(1.0805);">View SignalFlow</span>
<span class="t" style="left:44.3px;top:532px;font-size:15.5px;color:#2e2e2e;-webkit-text-stroke:0.22px;transform:scaleX(0.93);-webkit-text-stroke:0.1px;">A</span>
<span class="t" style="left:44.3px;top:578px;font-size:15.5px;color:#2e2e2e;-webkit-text-stroke:0.22px;transform:scaleX(0.93);-webkit-text-stroke:0.1px;">B</span>
<span class="t" style="left:44.3px;top:624px;font-size:15.5px;color:#2e2e2e;-webkit-text-stroke:0.22px;transform:scaleX(0.93);-webkit-text-stroke:0.1px;">C</span>
<span class="t" style="left:44.2px;top:670px;font-size:15.5px;color:#2e2e2e;-webkit-text-stroke:0.22px;transform:scaleX(0.93);-webkit-text-stroke:0.1px;">D</span>
<span class="t" style="left:113.7px;top:532px;font-size:11.7px;color:#161616;-webkit-text-stroke:0.22px;transform:scaleX(1.0359);">demo.trans.latency</span>
<span class="t" style="left:268.6px;top:533px;font-size:11px;color:#fff;font-weight:700;transform:scaleX(1.0364);">demo_datacenter:Paris</span>
<span class="t" style="left:858.7px;top:533px;font-size:11px;color:#fff;font-weight:700;transform:scaleX(1.0726);">P95</span>
<span class="t" style="left:113.7px;top:578px;font-size:11.7px;color:#161616;-webkit-text-stroke:0.22px;transform:scaleX(1.0359);">demo.trans.latency</span>
<span class="t" style="left:268.6px;top:579px;font-size:11px;color:#fff;font-weight:700;transform:scaleX(1.0364);">demo_datacenter:Paris</span>
<span class="t" style="left:858.7px;top:579px;font-size:11px;color:#fff;font-weight:700;transform:scaleX(1.0726);">P95</span>
<span class="t" style="left:113.5px;top:625px;font-size:11.2px;color:#161616;-webkit-text-stroke:0.22px;transform:scaleX(1.0023);">A-B</span>
<span class="t" style="left:685.3px;top:533px;font-size:11px;color:#555;-webkit-text-stroke:0.22px;transform:scaleX(1.1108);">9 ts</span>
<span class="t" style="left:685.8px;top:579px;font-size:11px;color:#555;-webkit-text-stroke:0.22px;transform:scaleX(1.0826);">? ts</span>
<span class="t" style="left:735.5px;top:533px;font-size:11px;color:#2459cf;-webkit-text-stroke:0.22px;transform:scaleX(1.0651);">Average Rollup</span>
<span class="t" style="left:918.1px;top:579px;font-size:11px;color:#fff;font-weight:700;transform:scaleX(1.0521);">Timeshift 1w</span>
<span class="t" style="left:858.7px;top:624px;font-size:11px;color:#fff;font-weight:700;transform:scaleX(1.0185);">Add Analytics</span>
<span class="t" style="left:1169.4px;top:532px;font-size:12.2px;color:#2459cf;-webkit-text-stroke:0.22px;transform:scaleX(0.9875);">demo.trans.latency - P95</span>
<span class="t" style="left:1169.4px;top:578px;font-size:12.2px;color:#2459cf;-webkit-text-stroke:0.22px;transform:scaleX(0.9970);">demo.trans.latency - P95 - Timeshift 1w</span>
<span class="t" style="left:1169.4px;top:625px;font-size:12.2px;color:#2459cf;-webkit-text-stroke:0.22px;transform:scaleX(0.9396);">A-B</span>
<span class="t" style="left:1522.2px;top:532px;font-size:12px;color:#2459cf;-webkit-text-stroke:0.22px;transform:scaleX(1.1052);">left</span>
<span class="t" style="left:1522.2px;top:578px;font-size:12px;color:#2459cf;-webkit-text-stroke:0.22px;transform:scaleX(1.1052);">left</span>
<span class="t" style="left:1522.2px;top:625px;font-size:12px;color:#2459cf;-webkit-text-stroke:0.22px;transform:scaleX(1.1052);">left</span>
<span class="t" style="left:92.3px;top:671px;font-size:11px;color:#fff;font-weight:700;transform:scaleX(1.0203);">Add Metric Or Event</span>
<span class="t" style="left:226.6px;top:671px;font-size:11px;color:#fff;font-weight:700;">Enter Formula</span>
<span class="t" style="left:327.6px;top:671px;font-size:11px;color:#fff;font-weight:700;transform:scaleX(1.0413);">Link Detector</span>
<span class="t" style="left:441.2px;top:672px;font-size:11px;color:#2459cf;-webkit-text-stroke:0.22px;transform:scaleX(1.0876);">Browse</span>
</body></html>
